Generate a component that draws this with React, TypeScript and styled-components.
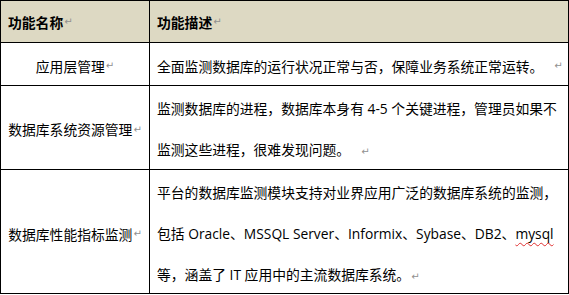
import styled, { createGlobalStyle } from "styled-components"

const GlobalStyle = createGlobalStyle`
  html, body {
    margin: 0;
    padding: 0;
    background: #fff;
  }
  body {
    font-family: "Open Sans", "Noto Sans CJK SC", sans-serif;
    color: #000;
  }
`

const Table = styled.div`
  display: grid;
  grid-template-columns: 149px 419px;
  grid-template-rows: 42px 43px 84px 124px;
  width: 569px;
  box-sizing: border-box;
  border-left: 1px solid #000;
  border-top: 1px solid #000;
`

type CellProps = {
  $head?: boolean
  $center?: boolean
  $shift?: number
}
const Cell = styled.div<CellProps>`
  box-sizing: border-box;
  border-right: 1px solid #000;
  border-bottom: 1px solid #000;
  background: ${({ $head }) => ($head ? '#ddd9c3' : '#fff')};
  display: flex;
  align-items: center;
  justify-content: ${({ $center }) => ($center ? 'center' : 'flex-start')};
  padding: ${({ $shift }) => $shift ?? 0}px 0 0 ${({ $center }) => ($center ? 0 : 7)}px;
  font-size: 13.8px;
  font-weight: ${({ $head }) => ($head ? 700 : 400)};
  white-space: nowrap;
`

const Lines = styled.div`
  line-height: 41px;
`

const Mark = styled.span<{ $gap?: boolean }>`
  color: #909090;
  font-family: "DejaVu Sans", sans-serif;
  font-size: 10px;
  font-weight: 400;
  margin-left: ${({ $gap }) => ($gap ? '11px' : '1px')};
`

const Squiggle = styled.span`
  text-decoration: underline wavy #e03030;
  text-decoration-thickness: 1px;
  text-underline-offset: 3px;
`

export default function App() {
  return (
    <>
      <GlobalStyle />
      <Table>
        <Cell $head>功能名称<Mark>↵</Mark></Cell>
        <Cell $head>功能描述<Mark>↵</Mark></Cell>

        <Cell $center $shift={3}>应用层管理<Mark>↵</Mark></Cell>
        <Cell $shift={3}>全面监测数据库的运行状况正常与否，保障业务系统正常运转。<Mark $gap>↵</Mark></Cell>

        <Cell $center $shift={3}>数据库系统资源管理<Mark>↵</Mark></Cell>
        <Cell $shift={4}>
          <Lines>
            监测数据库的进程，数据库本身有 4-5 个关键进程，管理员如果不<br />
            监测这些进程，很难发现问题。<Mark $gap>↵</Mark>
          </Lines>
        </Cell>

        <Cell $center $shift={4}>数据库性能指标监测<Mark>↵</Mark></Cell>
        <Cell $shift={6}>
          <Lines>
            平台的数据库监测模块支持对业界应用广泛的数据库系统的监测，<br />
            包括 Oracle、MSSQL Server、Informix、Sybase、DB2、<Squiggle>mysql</Squiggle><br />
            等，涵盖了 IT 应用中的主流数据库系统。<Mark>↵</Mark>
          </Lines>
        </Cell>
      </Table>
    </>
  )
}
